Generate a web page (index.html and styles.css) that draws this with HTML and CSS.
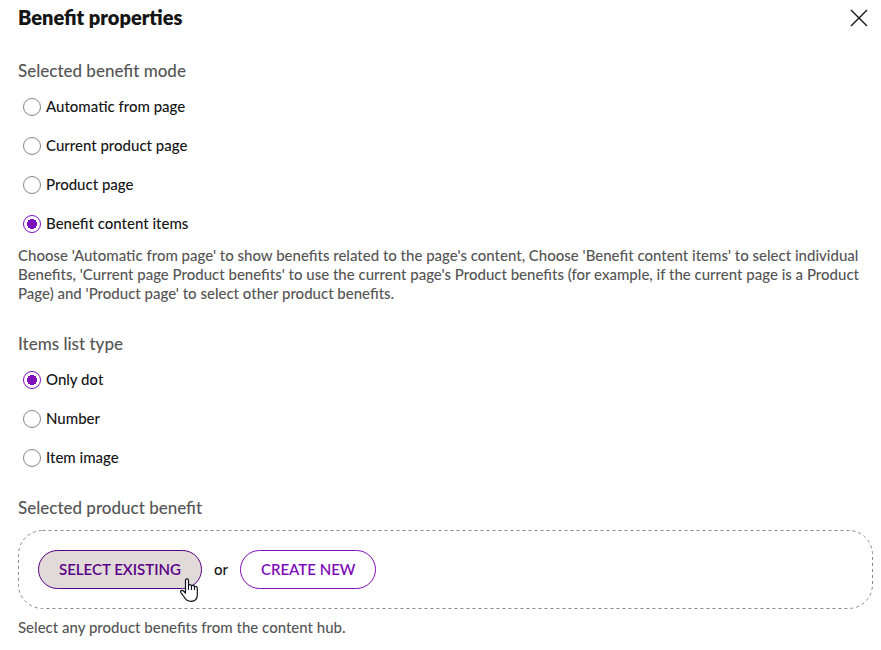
FILE: index.html
```
<!DOCTYPE html>
<html lang="en">
<head>
  <meta charset="UTF-8" />
  <meta name="viewport" content="width=device-width, initial-scale=1" />
  <title>Benefit properties</title>
  <link rel="stylesheet" href="styles.css">
</head>
<body>
  <form class="dialog">
    <header class="dialog-header">
      <h1>Benefit properties</h1>
      <button type="button" class="close" aria-label="Close">
        <svg width="18" height="18" viewBox="0 0 18 18">
          <path d="M1 1 L17 17 M17 1 L1 17" stroke="#151515" stroke-width="1.4" fill="none" />
        </svg>
      </button>
    </header>

    <fieldset class="group">
      <legend>Selected benefit mode</legend>
      <label class="option"><input type="radio" name="mode" />Automatic from page</label>
      <label class="option"><input type="radio" name="mode" />Current product page</label>
      <label class="option"><input type="radio" name="mode" />Product page</label>
      <label class="option"><input type="radio" name="mode" checked />Benefit content items</label>
      <p class="help">Choose 'Automatic from page' to show benefits related to the page's content, Choose 'Benefit content items' to select individual Benefits, 'Current page Product benefits' to use the current page's Product benefits (for example, if the current page is a Product Page) and 'Product page' to select other product benefits.</p>
    </fieldset>

    <fieldset class="group">
      <legend>Items list type</legend>
      <label class="option"><input type="radio" name="listType" checked />Only dot</label>
      <label class="option"><input type="radio" name="listType" />Number</label>
      <label class="option"><input type="radio" name="listType" />Item image</label>
    </fieldset>

    <fieldset class="group">
      <legend>Selected product benefit</legend>
      <div class="picker">
        <svg class="picker-border" aria-hidden="true">
          <rect class="picker-line" rx="24" />
        </svg>
        <div class="select-wrap">
          <button type="button" class="pill active">SELECT EXISTING</button>
          <svg class="pointer" width="18" height="24" viewBox="0 0 18 24" aria-hidden="true">
            <path d="M5.5 15 V2.5 C5.5 .2 8.5 .2 8.5 2.5 V8 C8.5 6 11.5 6 11.5 8.5 C11.5 6.5 14.5 6.8 14.5 9.3 C14.5 7.6 17.3 8 17.3 10.3 V16.5 C17.3 21 14.5 23.3 11 23.3 C7 23.3 5.5 21.5 4.2 19 L1 14.8 C-.2 12.8 2 11.6 3.6 13 Z" fill="#fff" stroke="#101020" stroke-width="1.2" stroke-linejoin="round" />
            <path d="M8.5 7.5 V12 M11.5 8 V12 M14.5 9 V12" stroke="#101020" stroke-width="1.1" fill="none" />
          </svg>
        </div>
        <span class="or">or</span>
        <button type="button" class="pill">CREATE NEW</button>
      </div>
      <p class="help">Select any product benefits from the content hub.</p>
    </fieldset>
  </form>
</body>
</html>
```
FILE: styles.css
```
* {
  box-sizing: border-box;
}

body {
  margin: 0;
  font-family: Lato, sans-serif;
  font-size: 15px;
  font-weight: 500;
  line-height: 19px;
  color: #151515;
  background: #fff;
}

.dialog {
  padding: 0 8px 0 18px;
}

.dialog-header {
  display: flex;
  justify-content: space-between;
  align-items: center;
  height: 35px;
  margin-bottom: 24px;
}

h1 {
  margin: 0;
  padding-bottom: 2px;
  font-size: 20px;
  line-height: 24px;
  font-weight: 800;
}

.close {
  display: flex;
  padding: 5px;
  border: none;
  background: none;
  cursor: pointer;
}

.group {
  margin: 0 0 19px;
  padding: 0;
  border: none;
  min-width: 0;
}

legend {
  padding: 0;
  margin-bottom: 4px;
  font-size: 17px;
  font-weight: 500;
  line-height: 24px;
  color: #555;
}

.option {
  display: flex;
  align-items: center;
  gap: 5px;
  height: 39px;
  padding-left: 5px;
}

input[type="radio"] {
  appearance: none;
  width: 18px;
  height: 18px;
  margin: 0;
  border: 1px solid #858585;
  border-radius: 50%;
  background: #fff;
}

input[type="radio"]:checked {
  border-color: #7f0fb8;
  background: radial-gradient(circle, #7f0fb8 5px, #fff 5px);
}

.help {
  margin: 3px 8px 10px 0;
  color: #555;
}

.picker {
  position: relative;
  display: flex;
  align-items: center;
  gap: 12px;
  margin: 6px 0 9px;
  padding: 20px;
}

/* evenly spaced dashes around the picker */
.picker-border {
  position: absolute;
  inset: 0;
  width: 100%;
  height: 100%;
  overflow: visible;
}

.picker-line {
  x: 0.5px;
  y: 0.5px;
  width: calc(100% - 1px);
  height: calc(100% - 1px);
  fill: none;
  stroke: #888;
  stroke-dasharray: 3 3;
}

.select-wrap {
  position: relative;
}

.pill {
  position: relative;
  height: 39px;
  padding: 0 20px;
  border: 1px solid #7f0fb8;
  border-radius: 20px;
  background: #fff;
  color: #7f0fb8;
  font: inherit;
  font-size: 15px;
  font-weight: 600;
  cursor: pointer;
}

.pill.active {
  border-color: #5c0087;
  background: #e0dad8;
  color: #5c0087;
}

.pointer {
  position: absolute;
  right: 4px;
  bottom: -13px;
}
```
